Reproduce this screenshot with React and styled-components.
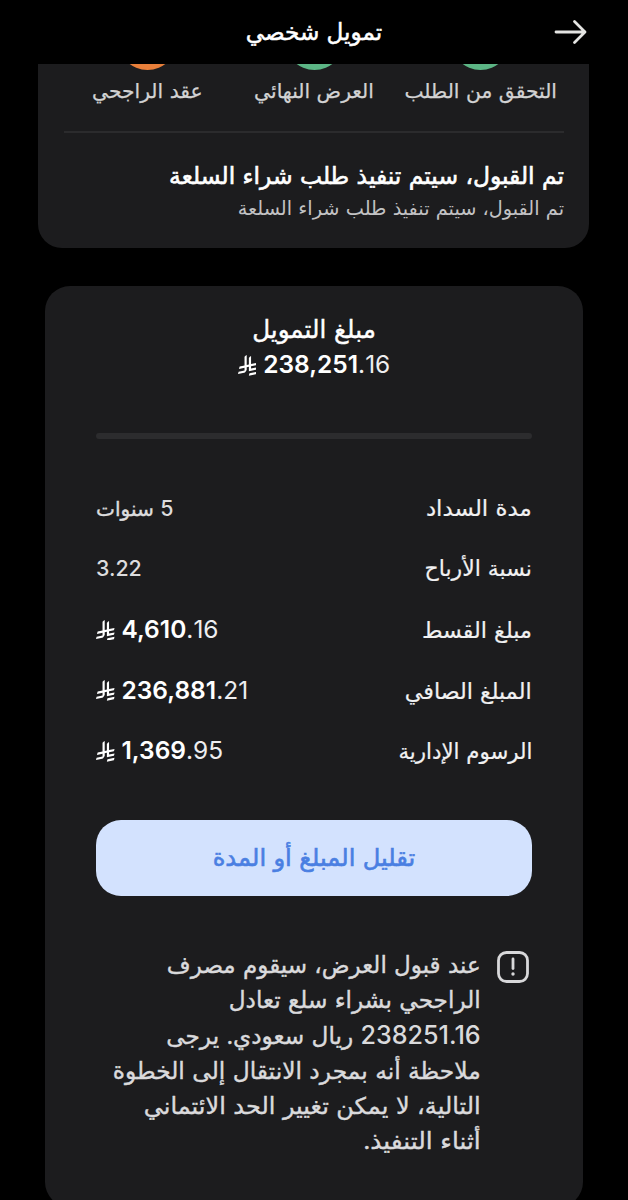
import React from "react";
import styled, { createGlobalStyle } from "styled-components";

const steps = [
  { text: "التحقق من الطلب", color: "#5cb585" },
  { text: "العرض النهائي", color: "#5cb585" },
  { text: "عقد الراجحي", color: "#e87f3a" },
];

const details = [
  { label: "مدة السداد", stretch: 1.04, years: "5" },
  { label: "نسبة الأرباح", stretch: 1, text: "3.22" },
  { label: "مبلغ القسط", stretch: 1.01, whole: "4,610", fraction: ".16" },
  { label: "المبلغ الصافي", stretch: 1.01, whole: "236,881", fraction: ".21" },
  { label: "الرسوم الإدارية", stretch: 0.968, whole: "1,369", fraction: ".95" },
];

const noteLines = [
  { text: "عند قبول العرض، سيقوم مصرف", stretch: 0.997 },
  { text: "الراجحي بشراء سلع تعادل", stretch: 1.004 },
  { number: "238251.16", text: " ريال سعودي. يرجى", stretch: 1.005 },
  { text: "ملاحظة أنه بمجرد الانتقال إلى الخطوة", stretch: 1.012 },
  { text: "التالية، لا يمكن تغيير الحد الائتماني", stretch: 1.037 },
  { text: "أثناء التنفيذ.", stretch: 1.07 },
];

function Riyal() {
  return (
    <RiyalIcon viewBox="0 0 1124.14 1256.39">
      <path d="M699.62,1113.02h0c-20.06,44.48-33.32,92.75-38.4,143.37l424.51-90.24c20.06-44.47,33.31-92.75,38.4-143.37l-424.51,90.24Z" />
      <path d="M1085.73,895.8c20.06-44.47,33.32-92.75,38.4-143.37l-330.68,70.33v-135.2l292.27-62.11c20.06-44.47,33.32-92.75,38.4-143.37l-330.68,70.27V66.13c-50.67,28.45-95.67,66.32-132.25,110.99v403.35l-132.25,28.11V0c-50.67,28.44-95.67,66.32-132.25,110.99v525.69l-295.91,62.88c-20.06,44.47-33.33,92.75-38.42,143.37l334.33-71.05v170.26l-358.3,76.14c-20.06,44.47-33.32,92.75-38.4,143.37l375.04-79.7c30.53-6.35,56.77-24.4,73.83-49.24l68.78-101.97v-.02c7.14-10.55,11.3-23.27,11.3-36.97v-149.98l132.25-28.11v270.4l424.53-90.28Z" />
    </RiyalIcon>
  );
}

function Money({ whole, fraction }) {
  return (
    <Amount>
      <Riyal />
      <Whole>{whole}</Whole>
      <Fraction>{fraction}</Fraction>
    </Amount>
  );
}

function DetailValue({ item }) {
  if (item.whole) return <Money whole={item.whole} fraction={item.fraction} />;
  if (item.years) {
    return (
      <Plain dir="rtl">
        {item.years} <Years>سنوات</Years>
      </Plain>
    );
  }
  return <Plain>{item.text}</Plain>;
}

export default function App() {
  return (
    <Screen dir="rtl">
      <GlobalStyle />
      <Header>
        <Title>تمويل شخصي</Title>
        <ForwardIcon viewBox="0 0 34 26">
          <path d="M2 13H31M20.5 2.5L31 13L20.5 23.5" />
        </ForwardIcon>
      </Header>

      <StatusCard>
        <Steps>
          {steps.map((step) => (
            <Step key={step.text}>
              <StepDot $color={step.color} />
              <StepLabel>{step.text}</StepLabel>
            </Step>
          ))}
        </Steps>
        <Divider />
        <StatusTitle>تم القبول، سيتم تنفيذ طلب شراء السلعة</StatusTitle>
        <StatusText>تم القبول، سيتم تنفيذ طلب شراء السلعة</StatusText>
      </StatusCard>

      <OfferCard>
        <OfferTitle>مبلغ التمويل</OfferTitle>
        <OfferAmount>
          <Money whole="238,251" fraction=".16" />
        </OfferAmount>
        <Track />
        <Details>
          {details.map((item) => (
            <DetailRow key={item.label}>
              <DetailLabel $stretch={item.stretch}>{item.label}</DetailLabel>
              <DetailValue item={item} />
            </DetailRow>
          ))}
        </Details>
        <ReduceButton>تقليل المبلغ أو المدة</ReduceButton>
        <Note>
          <NoteIcon viewBox="0 0 32 32">
            <rect x="1.5" y="1.5" width="29" height="29" rx="8" />
            <path d="M16 8V17.5" />
            <circle cx="16" cy="23" r="1.7" />
          </NoteIcon>
          <NoteText>
            {noteLines.map((line) => (
              <NoteLine key={line.text} $stretch={line.stretch}>
                {line.number && <NoteNumber>{line.number}</NoteNumber>}
                {line.text}
              </NoteLine>
            ))}
          </NoteText>
        </Note>
      </OfferCard>
    </Screen>
  );
}

const GlobalStyle = createGlobalStyle`
  * {
    box-sizing: border-box;
  }

  body {
    margin: 0;
    background: #000;
    font-family: Inter, "DejaVu Sans", sans-serif;
  }
`;

const Screen = styled.div`
  height: 1200px;
  overflow: hidden;
  background: #000;
  color: #fff;
  white-space: nowrap;
  word-spacing: 0.8px;
`;

const Header = styled.header`
  height: 64px;
  padding: 17px 40px 0;
  display: grid;
  grid-template-columns: 34px 1fr 34px;
`;

const Title = styled.h1`
  grid-column: 2;
  grid-row: 1;
  margin: 0;
  font-size: 23.1px;
  font-weight: 400;
  line-height: 30px;
  text-align: center;
  -webkit-text-stroke: 0.5px;
`;

const ForwardIcon = styled.svg`
  grid-column: 1;
  grid-row: 1;
  margin-top: 2px;
  width: 34px;
  height: 26px;
  fill: none;
  stroke: #e4e4e2;
  stroke-width: 2.8;
  stroke-linecap: round;
  stroke-linejoin: round;
`;

const StatusCard = styled.section`
  margin: 0 39px 0 38px;
  height: 183.5px;
  padding: 0 25px 0 26px;
  border-radius: 0 0 24px 24px;
  background: #1c1c1e;
  overflow: hidden;
`;

const Steps = styled.div`
  margin-top: -53px;
  display: grid;
  grid-template-columns: repeat(3, 1fr);
`;

const Step = styled.div`
  display: flex;
  flex-direction: column;
  align-items: center;
`;

const StepDot = styled.div`
  width: 59px;
  height: 59px;
  border-radius: 50%;
  background: ${(props) => props.$color};
`;

const StepLabel = styled.div`
  margin-top: 6px;
  font-size: 20.3px;
  line-height: 30px;
  color: #d2d2d3;
  -webkit-text-stroke: 0.25px;
`;

const Divider = styled.div`
  margin-top: 25px;
  height: 1.5px;
  background: #2b2b2d;
`;

const StatusTitle = styled.h2`
  margin: 28.5px 0 0;
  font-size: 23.4px;
  font-weight: 400;
  line-height: 30px;
  -webkit-text-stroke: 0.6px;
`;

const StatusText = styled.p`
  margin: 2px 0 0;
  font-size: 19.3px;
  line-height: 30px;
  color: #c2c2c4;
`;

const OfferCard = styled.section`
  margin: 38.5px 45px 0;
  height: 921px;
  padding: 27.5px 51px 0;
  border-radius: 25px;
  background: #1c1c1e;
`;

const OfferTitle = styled.h2`
  margin: 0;
  font-size: 24.6px;
  font-weight: 400;
  line-height: 30px;
  text-align: center;
  -webkit-text-stroke: 0.4px;
`;

const OfferAmount = styled.div`
  margin-top: 5.5px;
  display: flex;
  justify-content: center;
  font-size: 22px;
  line-height: 30px;
`;

const Track = styled.div`
  margin-top: 52.5px;
  height: 6px;
  border-radius: 3px;
  background: #2c2c2e;
`;

const Details = styled.div`
  margin-top: 54px;
  display: grid;
  grid-auto-rows: 30px;
  row-gap: 30.7px;
`;

const DetailRow = styled.div`
  display: flex;
  justify-content: space-between;
  align-items: baseline;
  font-size: 22px;
  line-height: 30px;
`;

const DetailLabel = styled.div`
  color: #f1f1f2;
  transform: scaleX(${(props) => props.$stretch});
  transform-origin: right;
  -webkit-text-stroke: 0.2px;
`;

const Plain = styled.div`
  font-size: 21.4px;
  font-weight: 500;
  color: #dcdcde;
`;

const Years = styled.span`
  font-size: 20.1px;
  -webkit-text-stroke: 0.4px;
`;

const Amount = styled.div`
  direction: ltr;
`;

const RiyalIcon = styled.svg`
  width: 18.5px;
  height: 20.7px;
  margin-right: 7px;
  vertical-align: -2.5px;
  fill: currentColor;
`;

const Whole = styled.span`
  font-size: 24.5px;
  font-weight: 600;
`;

const Fraction = styled.span`
  font-size: 24.5px;
  font-weight: 400;
  font-kerning: none;
  color: #eeeef0;
`;

const ReduceButton = styled.button`
  display: block;
  margin-top: 54.5px;
  padding: 0;
  width: 100%;
  height: 76px;
  border: 0;
  border-radius: 25px;
  background: #d3e2fe;
  color: #4a7fe2;
  font-family: inherit;
  font-size: 24.2px;
  line-height: 30px;
  word-spacing: 0.5px;
  -webkit-text-stroke: 0.6px;
`;

const Note = styled.div`
  margin-top: 52px;
  padding-right: 3px;
  display: flex;
  align-items: flex-start;
  gap: 16.5px;
`;

const NoteIcon = styled.svg`
  flex: none;
  margin-top: 3px;
  width: 32px;
  height: 32px;
  fill: none;
  stroke: #d8d8da;
  stroke-width: 2.8;
  stroke-linecap: round;

  circle {
    fill: #d8d8da;
    stroke: none;
  }
`;

const NoteText = styled.div`
  font-size: 23.1px;
  line-height: 35px;
  color: #dadadc;
  -webkit-text-stroke: 0.4px;
`;

const NoteLine = styled.div`
  transform: scaleX(${(props) => props.$stretch});
  transform-origin: right;
`;

const NoteNumber = styled.span`
  font-size: 25px;
  font-weight: 500;
  -webkit-text-stroke: 0;
`;
